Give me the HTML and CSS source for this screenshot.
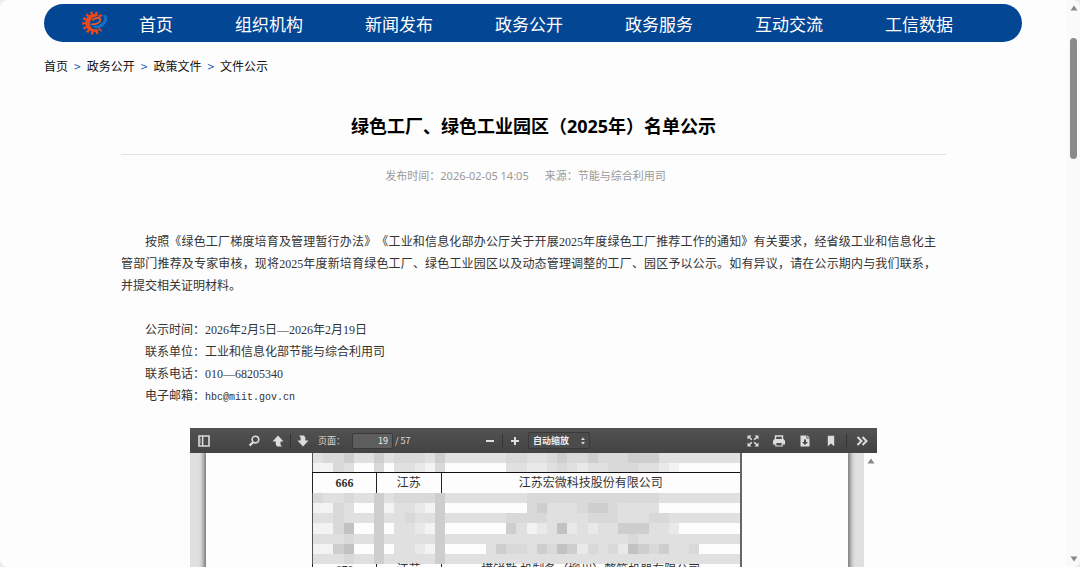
FILE: index.html
```html
<!DOCTYPE html>
<html lang="zh-CN">
<head>
  <meta charset="UTF-8">
  <meta name="viewport" content="width=device-width, initial-scale=1.0">
  <title>绿色工厂、绿色工业园区（2025年）名单公示</title>
  <link rel="stylesheet" href="styles.css">
</head>
<body>
  <div class="window">
    <div class="content">

      <!-- Main Navigation -->
      <nav class="main-nav">
        <svg class="logo" viewBox="0 0 26 24" aria-hidden="true">
          <path d="M18.5 6.2A9 9 0 1 0 18.5 17.8" fill="none" stroke="#e8481c" stroke-width="5" stroke-dasharray="2.2 2" />
          <path d="M17.5 4.6A9 9 0 1 0 18.5 18.4C14 19.6 8.4 18 8 13.2C7.8 8.4 12.6 5 17.5 4.6Z" fill="#e8481c" />
          <path d="M9 13.4C14 13.6 18.6 11.6 18.4 8.6C18.2 6 13 6.2 10.4 9.6" fill="none" stroke="#ee5a22" stroke-width="1.6" />
          <path d="M10.4 14.4C11.4 17.4 15.5 18.2 19.5 16C23.5 13.8 26 9.4 24.6 5.6C23.8 4.4 21.6 4 20 4.4C22.8 5.4 23 8.4 21 11C18.6 14.2 13.6 15.6 10.4 14.4Z" fill="#1673c4" />
        </svg>
        <a href="#">首页</a>
        <a href="#">组织机构</a>
        <a href="#">新闻发布</a>
        <a href="#">政务公开</a>
        <a href="#">政务服务</a>
        <a href="#">互动交流</a>
        <a href="#">工信数据</a>
      </nav>

      <!-- Breadcrumb -->
      <div class="breadcrumb">
        <a href="#">首页</a><span>&gt;</span><a href="#">政务公开</a><span>&gt;</span><a href="#">政策文件</a><span>&gt;</span><a href="#">文件公示</a>
      </div>

      <!-- Article -->
      <article class="article">
        <h1>绿色工厂、绿色工业园区（2025年）名单公示</h1>
        <div class="meta">
          <span>发布时间：2026-02-05 14:05</span>
          <span>来源：节能与综合利用司</span>
        </div>

        <div class="text">
          <p>按照《绿色工厂梯度培育及管理暂行办法》《工业和信息化部办公厅关于开展2025年度绿色工厂推荐工作的通知》有关要求，经省级工业和信息化主管部门推荐及专家审核，现将2025年度新培育绿色工厂、绿色工业园区以及动态管理调整的工厂、园区予以公示。如有异议，请在公示期内与我们联系，并提交相关证明材料。</p>
          <p class="first-contact">公示时间：2026年2月5日—2026年2月19日</p>
          <p>联系单位：工业和信息化部节能与综合利用司</p>
          <p>联系电话：010—68205340</p>
          <p>电子邮箱：<span class="mono">hbc@miit.gov.cn</span></p>
        </div>

        <!-- PDF Viewer -->
        <section class="viewer">
          <div class="toolbar">
            <button type="button" class="toggle" aria-label="切换侧栏">
              <svg viewBox="0 0 12 12"><path d="M1 1H11V11H1Z" fill="none" stroke="#ddd" stroke-width="1.6" /><path d="M4.7 1V11" stroke="#ddd" stroke-width="1.4" /><path d="M2.8 3V9" stroke="#aaa" stroke-width="0.8" /></svg>
            </button>
            <button type="button" aria-label="查找">
              <svg viewBox="0 0 12 12"><circle cx="7.4" cy="4.6" r="3.3" fill="none" stroke="#ddd" stroke-width="1.6" /><path d="M5 7.2L1.6 10.6" stroke="#ddd" stroke-width="2.2" /></svg>
            </button>
            <button type="button" aria-label="上一页">
              <svg viewBox="0 0 12 12"><path d="M6 0.5L11.5 6.5H8.5V9.5L10 11.5H5L3.8 9.5V6.5H0.5Z" fill="#ddd" /></svg>
            </button>
            <i class="separator"></i>
            <button type="button" aria-label="下一页">
              <svg viewBox="0 0 12 12"><path d="M6 11.5L11.5 5.5H8.3V2.5L7 0.5H2L3.6 2.5V5.5H0.5Z" fill="#ddd" /></svg>
            </button>
            <label for="pageNumber">页面：</label>
            <input type="text" id="pageNumber" value="19">
            <span class="page-total">/ 57</span>

            <div class="zoom">
              <button type="button" aria-label="缩小">
                <svg viewBox="0 0 12 12"><path d="M2 6H10" stroke="#ddd" stroke-width="2" /></svg>
              </button>
              <i class="separator"></i>
              <button type="button" aria-label="放大">
                <svg viewBox="0 0 12 12"><path d="M2 6H10M6 2V10" stroke="#ddd" stroke-width="2" /></svg>
              </button>
              <div class="select-box">
                <select aria-label="缩放">
                  <option>自动缩放</option>
                </select>
                <svg viewBox="0 0 6 8"><path d="M1 3L3 0.5L5 3ZM1 5L3 7.5L5 5Z" fill="#ddd" /></svg>
              </div>
            </div>

            <div class="actions">
              <button type="button" aria-label="全屏">
                <svg viewBox="0 0 12 12"><path d="M0.5 0.5H4.5L0.5 4.5ZM11.5 0.5V4.5L7.5 0.5ZM0.5 11.5V7.5L4.5 11.5ZM11.5 11.5H7.5L11.5 7.5Z" fill="#ddd" /><path d="M2 2L4.8 4.8M10 2L7.2 4.8M2 10L4.8 7.2M10 10L7.2 7.2" stroke="#ddd" stroke-width="1.6" /></svg>
              </button>
              <button type="button" aria-label="打印">
                <svg viewBox="0 0 12 12"><path d="M2.5 4.5V1H9.5V4.5" fill="none" stroke="#ddd" stroke-width="1.4" /><path d="M1.5 4H10.5L12 5.5V9.5H0V5.5Z" fill="#ddd" /><path d="M2.8 7.5H9.2V11H2.8Z" fill="#4a4a4a" stroke="#ddd" stroke-width="1.2" /></svg>
              </button>
              <button type="button" aria-label="下载">
                <svg viewBox="0 0 12 12"><path d="M1.5 0.5H7.5V3.5H10.5V11.5H1.5Z" fill="#ddd" /><path d="M8.3 0.3L10.7 2.7H8.3Z" fill="#ddd" /><path d="M5 4.5H7V7H9L6 10L3 7H5Z" fill="#4a4a4a" /></svg>
              </button>
              <button type="button" aria-label="书签">
                <svg viewBox="0 0 12 12"><path d="M2.8 0.8H9.2V11.2L6 8.4L2.8 11.2Z" fill="#ddd" /></svg>
              </button>
              <i class="separator"></i>
              <button type="button" aria-label="工具">
                <svg viewBox="0 0 12 12"><path d="M1.5 2L5.5 6L1.5 10M6.5 2L10.5 6L6.5 10" fill="none" stroke="#ddd" stroke-width="2" /></svg>
              </button>
            </div>
          </div>

          <div class="pages">
            <div class="canvas">
              <div class="page">
                <table>
                  <colgroup>
                    <col class="narrow">
                    <col class="narrow">
                    <col>
                  </colgroup>
                  <tr class="masked masked-top">
                    <td colspan="3"><svg class="mosaic" id="mosaicTop"></svg></td>
                  </tr>
                  <tr class="row">
                    <td class="number">666</td>
                    <td>江苏</td>
                    <td>江苏宏微科技股份有限公司</td>
                  </tr>
                  <tr class="masked">
                    <td colspan="3"><svg class="mosaic" id="mosaicRows"></svg></td>
                  </tr>
                  <tr class="row-last">
                    <td>670</td>
                    <td>江苏</td>
                    <td>模锐勒 机制备（柳州）整箱机器有限公司</td>
                  </tr>
                </table>
              </div>
            </div>
            <div class="inner-scroll">
              <svg viewBox="0 0 8 6"><path d="M4 0.5L7.5 5.5H0.5Z" fill="#888" /></svg>
            </div>
          </div>
        </section>
      </article>
    </div>

    <!-- Page Scrollbar -->
    <div class="scrollbar">
      <svg viewBox="0 0 8 6"><path d="M4 0.5L7.5 5.5H0.5Z" fill="#888" /></svg>
      <div class="thumb"></div>
      <svg viewBox="0 0 8 6"><path d="M4 5.5L7.5 0.5H0.5Z" fill="#888" /></svg>
    </div>
  </div>

  <script src="mosaic.js"></script>
</body>
</html>
```

FILE: styles.css
```css
body {
  margin: 0;
  background-color: #ececec;
  font-family: "Noto Sans CJK SC", sans-serif;
  text-spacing-trim: space-all;
}

a {
  color: inherit;
  text-decoration: none;
}

.window {
  display: flex;
  height: 100vh;
  overflow: hidden;
  border-radius: 8px;
  background-color: #fdfdfd;
}

.content {
  flex: 1;
  min-width: 0;
  padding: 4px 45px 0 44px;
}

/* Navigation */
.main-nav {
  display: flex;
  align-items: center;
  gap: 62px;
  height: 38px;
  padding-left: 38px;
  border-radius: 19px;
  background-color: #034694;
  color: #fff;
  font-size: 17px;
  white-space: nowrap;
}

.logo {
  width: 26px;
  height: 24px;
  margin-right: -31px;
}

/* Breadcrumb */
.breadcrumb {
  margin-top: 14px;
  font-size: 12px;
  line-height: 20px;
  color: #111;
}

.breadcrumb span {
  margin: 0 6px;
  color: #1a5fb4;
}

/* Article */
.article {
  padding: 0 76px 0 77px;
}

h1 {
  margin: 36px 0 0;
  padding-bottom: 14px;
  border-bottom: 1px solid #e2e2e2;
  font-family: "Noto Sans", "Noto Sans CJK SC", sans-serif;
  font-size: 18px;
  line-height: 28px;
  text-align: center;
  color: #000;
}

.meta {
  margin-top: 12px;
  font-family: "Noto Sans", "Noto Sans CJK SC", sans-serif;
  display: flex;
  justify-content: center;
  font-size: 11px;
  line-height: 18px;
  color: #999;
}

.meta span {
  margin-right: 16px;
}

.text {
  margin-top: 46px;
  padding-right: 10px;
  font-family: "Liberation Serif", "Noto Sans CJK SC", serif;
  font-size: 12px;
  line-height: 22px;
  text-align: justify;
  color: #333;
}

.text p {
  margin: 0;
  text-indent: 2em;
}

.text .first-contact {
  margin-top: 22px;
}

.mono {
  font-family: "Liberation Mono", monospace;
  font-size: 10px;
}

/* PDF viewer */
.viewer {
  margin: 19px 69px 0;
}

.toolbar {
  display: flex;
  align-items: center;
  height: 25px;
  padding: 0 2px;
  background: linear-gradient(#525252, #434343);
  color: #ddd;
  font-size: 9px;
  white-space: nowrap;
}

.toolbar button {
  display: flex;
  align-items: center;
  justify-content: center;
  width: 24px;
  height: 24px;
  padding: 0;
  border: none;
  background: none;
}

.toolbar button svg {
  width: 12px;
  height: 12px;
}

.toolbar .toggle {
  margin-right: 26px;
}

.separator {
  width: 1px;
  height: 13px;
  background-color: #333;
}

.toolbar label {
  width: 34px;
  margin-left: 3px;
}

.toolbar input {
  box-sizing: border-box;
  width: 41px;
  height: 16px;
  padding: 0 4px;
  border: 1px solid #3a3a3a;
  border-radius: 2px;
  background-color: #5e5e5e;
  color: #eee;
  font-family: inherit;
  font-size: 9px;
  text-align: right;
}

.page-total {
  width: 16px;
  margin-left: 2px;
}

.zoom {
  display: flex;
  align-items: center;
  margin-left: 67px;
}

.select-box {
  position: relative;
  margin-left: 1px;
}

.select-box select {
  display: block;
  appearance: none;
  width: 62px;
  height: 17px;
  padding: 0 4px;
  border: 1px solid #3a3a3a;
  border-radius: 2px;
  background-color: #4c4c4c;
  color: #eee;
  font-family: inherit;
  font-size: 9px;
  font-weight: bold;
}

.select-box svg {
  position: absolute;
  top: 5px;
  right: 4px;
  width: 6px;
  height: 8px;
}

.actions {
  display: flex;
  align-items: center;
  margin-left: auto;
}

.actions button {
  width: 26px;
}

.actions .separator {
  margin: 0 2px;
}

.pages {
  display: flex;
}

.canvas {
  flex: 1;
  overflow: hidden;
  padding: 0 16px;
  background-color: #e0e0e0;
}

.page {
  min-height: 800px;
  background-color: #fdfdfd;
  box-shadow: 0 0 5px 2px #666;
}

.inner-scroll {
  width: 13px;
  padding-top: 4px;
  text-align: center;
  line-height: 0;
}

.inner-scroll svg {
  width: 8px;
  height: 6px;
}

/* Enterprise table */
table {
  width: 67%;
  margin: 0 auto;
  border-collapse: collapse;
  table-layout: fixed;
  border-left: 1px solid #555;
  border-right: 2px solid #666;
  font-family: "Liberation Serif", "Noto Sans CJK SC", serif;
  font-size: 12px;
  text-align: center;
  color: #333;
}

.narrow {
  width: 15%;
}

td {
  padding: 0;
}

.row td {
  height: 20px;
  line-height: 20px;
  border-top: 1px solid #111;
  border-left: 1px solid #222;
}

.row .number {
  font-weight: bold;
}

.masked svg {
  display: block;
  width: 100%;
  height: 71px;
}

.masked-top svg {
  height: 19px;
}

.row-last td {
  line-height: 12px;
  border-left: 1px solid #222;
}

/* Page scrollbar */
.scrollbar {
  display: flex;
  flex-direction: column;
  align-items: center;
  width: 13px;
  padding: 5px 0;
  background-color: #fafafa;
}

.scrollbar svg {
  width: 8px;
  height: 6px;
}

.thumb {
  width: 7px;
  height: 121px;
  margin: 27px 0 auto;
  border-radius: 4px;
  background-color: #8a8a8a;
}
```

FILE: mosaic.js
```js
// Shades used by the masked rows, light to dark
const shades = {
  a: '#fdfdfd',
  b: '#f3f3f3',
  c: '#e9e9e9',
  d: '#e0e0e0',
  e: '#d9d9d9',
  f: '#cecece',
  g: '#c2c2c2'
};

const topRows = [
  'deefddfdeeedfddddddeeddefeefeeefffdddddddd',
  'bbedaaeaddcbeaaaaaaddccdedcddeeeddcbaaaaaa'
];

const maskedRows = [
  'eddeddfdeeeefddddddddeeeeeeeeeeeeedddddddd',
  'bbedaafbddcbfaaaaaaaaefdddeffeddddaaaaaaaa',
  'ddedddfddeddfddddddeeeeddddeeedddeeddddddd',
  'bbegaafaddcbfaaaaaafdbcdgcdcddfffddcaaaaaa',
  'dddeddfdddddfddddddddddddddddddedddddddddd',
  'bbfgaafaddcbfaaaadfeedfegfcedecgfefddeaaaa',
  'dddeddfdddddfddddddddddddddddddddddddddddd'
];

function drawMosaic(id, rows) {
  const svg = document.getElementById(id);
  svg.setAttribute('viewBox', '0 0 42 ' + rows.length);
  svg.setAttribute('preserveAspectRatio', 'none');
  svg.setAttribute('shape-rendering', 'crispEdges');

  rows.forEach((row, y) => {
    row.split('').forEach((shade, x) => {
      const rect = document.createElementNS('http://www.w3.org/2000/svg', 'rect');
      rect.setAttribute('x', x);
      rect.setAttribute('y', y);
      rect.setAttribute('width', 1);
      rect.setAttribute('height', 1);
      rect.setAttribute('fill', shades[shade]);
      svg.appendChild(rect);
    });
  });
}

drawMosaic('mosaicTop', topRows);
drawMosaic('mosaicRows', maskedRows);
```
